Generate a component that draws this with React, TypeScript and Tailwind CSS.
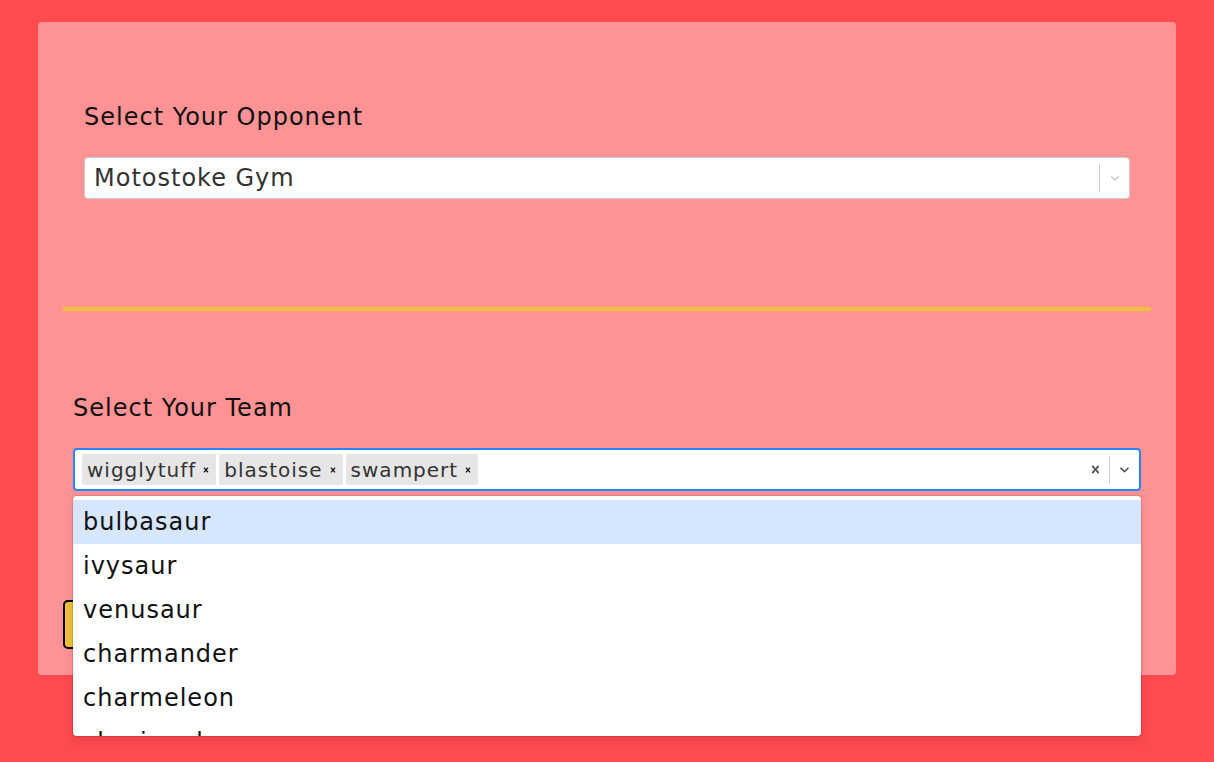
import { useState } from 'react';

const team = ['wigglytuff', 'blastoise', 'swampert'];
const options = ['bulbasaur', 'ivysaur', 'venusaur', 'charmander', 'charmeleon', 'charizard'];

function Chevron({ className }: { className: string }) {
  return (
    <svg viewBox="0 0 20 20" className={className} fill="currentColor">
      <path d="M4.516 7.548c0.436-0.446 1.043-0.481 1.576 0l3.908 3.747 3.908-3.747c0.533-0.481 1.141-0.446 1.574 0 0.436 0.445 0.408 1.197 0 1.615-0.406 0.418-4.695 4.502-4.695 4.502-0.217 0.223-0.502 0.335-0.787 0.335s-0.57-0.112-0.789-0.335c0 0-4.287-4.084-4.695-4.502s-0.436-1.17 0-1.615z" />
    </svg>
  );
}

function Cross({ className }: { className: string }) {
  return (
    <svg viewBox="0 0 20 20" className={className} fill="currentColor">
      <path d="M14.348 14.849c-0.469 0.469-1.229 0.469-1.697 0l-2.651-3.030-2.651 3.029c-0.469 0.469-1.229 0.469-1.697 0-0.469-0.469-0.469-1.229 0-1.697l2.758-3.15-2.759-3.152c-0.469-0.469-0.469-1.228 0-1.697s1.228-0.469 1.697 0l2.652 3.031 2.651-3.031c0.469-0.469 1.228-0.469 1.697 0s0.469 1.229 0 1.697l-2.758 3.152 2.758 3.15c0.469 0.469 0.469 1.229 0 1.698z" />
    </svg>
  );
}

export default function App() {
  const [active] = useState(0);

  return (
    <div className="min-h-screen bg-[#ff4a4f] px-[38px] pt-[22px] tracking-[1px] text-[#111] [font-family:'DejaVu_Sans',sans-serif]">
      <div className="h-[653px] rounded-[4px] bg-[#ff9294] pt-[79px]">
        <div className="px-[46px]">
          <label className="block text-[24px] leading-[32px]">Select Your Opponent</label>
          <div className="mt-[24px] flex h-[42px] items-center rounded-[4px] border border-[#cccccc] bg-white">
            <div className="flex-1 pl-[9px] text-[24px] text-[#333]">Motostoke Gym</div>
            <span className="h-[28px] w-px bg-[#cccccc]" />
            <div className="flex w-[29px] justify-center text-[#cccccc]">
              <Chevron className="h-[14px] w-[14px]" />
            </div>
          </div>
        </div>

        <div className="mx-[25px] mt-[108px] h-[4px] bg-[#f0c03a]" />

        <div className="relative px-[35px] pt-[81px]">
          <label className="block text-[24px] leading-[32px]">Select Your Team</label>
          <div className="mt-[24px] flex h-[43px] items-center rounded-[4px] border-2 border-[#2684ff] bg-white">
            <div className="flex flex-1 items-center gap-[3px] pl-[7px]">
              {team.map((name) => (
                <div key={name} className="flex h-[31px] items-center rounded-[2px] bg-[#e6e6e6] pl-[5px] pr-[5px]">
                  <span className="text-[20px] text-[#333]">{name}</span>
                  <Cross className="ml-[5px] h-[10px] w-[10px] text-[#111]" />
                </div>
              ))}
            </div>
            <div className="flex w-[28px] justify-center text-[#555]">
              <Cross className="h-[15px] w-[15px]" />
            </div>
            <span className="h-[28px] w-px bg-[#cccccc]" />
            <div className="flex w-[29px] justify-center text-[#555]">
              <Chevron className="h-[15px] w-[15px]" />
            </div>
          </div>

          <button className="ml-[-10px] mt-[109px] h-[49px] w-[40px] rounded-[5px] border-2 border-black bg-[#f0c03a]" />

          <div className="absolute left-[35px] right-[35px] top-[185px] z-10 h-[240px] overflow-hidden rounded-[4px] bg-white py-[4px] shadow-[0_0_0_1px_rgba(0,0,0,0.1),0_4px_11px_rgba(0,0,0,0.1)]">
            {options.map((name, i) => (
              <div
                key={name}
                className={
                  i === active
                    ? 'flex h-[44px] items-center bg-[#d6e6fd] px-[10px] text-[24px]'
                    : 'flex h-[44px] items-center px-[10px] text-[24px]'
                }
              >
                {name}
              </div>
            ))}
          </div>
        </div>
      </div>
    </div>
  );
}
